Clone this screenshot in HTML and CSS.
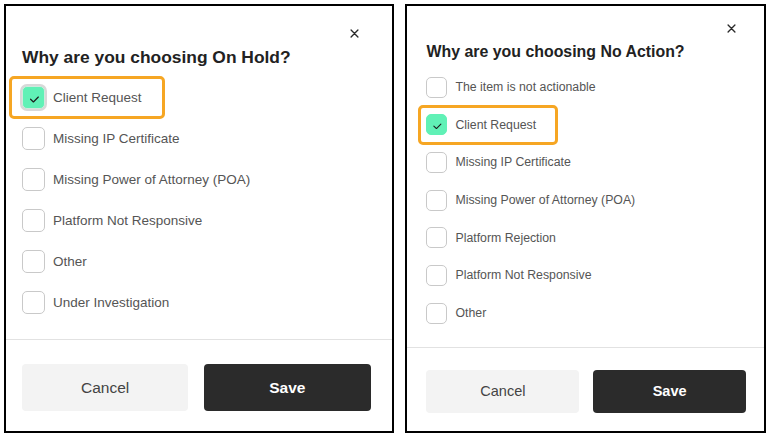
FILE: index.html
```html
<!DOCTYPE html>
<html lang="en">
<head>
<meta charset="utf-8">
<title>Reason dialogs</title>
<link rel="stylesheet" href="styles.css">
</head>
<body>
<div class="screen">
  <section class="dialog dialog--hold">
    <div class="dialog__body">
      <div class="dialog__top">
        <button class="dialog__close" aria-label="Close"><svg viewBox="0 0 10 10"><path d="M1.2 1.2L8.8 8.8M8.8 1.2L1.2 8.8"/></svg></button>
      </div>
      <h2 class="dialog__title">Why are you choosing On Hold?</h2>
      <ul class="options">
        <li class="option option--checked option--focus option--highlight"><span class="box"><svg viewBox="0 0 23 23"><path d="M8.3 13.4L11.4 16.4L16.8 11"/></svg></span><span class="option__text">Client Request</span></li>
        <li class="option"><span class="box"></span><span class="option__text">Missing IP Certificate</span></li>
        <li class="option"><span class="box"></span><span class="option__text">Missing Power of Attorney (POA)</span></li>
        <li class="option"><span class="box"></span><span class="option__text">Platform Not Responsive</span></li>
        <li class="option"><span class="box"></span><span class="option__text">Other</span></li>
        <li class="option"><span class="box"></span><span class="option__text">Under Investigation</span></li>
      </ul>
    </div>
    <div class="dialog__footer">
      <button class="btn btn--cancel">Cancel</button>
      <button class="btn btn--save">Save</button>
    </div>
  </section>

  <section class="dialog dialog--noaction">
    <div class="dialog__body">
      <div class="dialog__top">
        <button class="dialog__close" aria-label="Close"><svg viewBox="0 0 10 10"><path d="M1.2 1.2L8.8 8.8M8.8 1.2L1.2 8.8"/></svg></button>
      </div>
      <h2 class="dialog__title">Why are you choosing No Action?</h2>
      <ul class="options">
        <li class="option"><span class="box"></span><span class="option__text">The item is not actionable</span></li>
        <li class="option option--checked option--highlight"><span class="box"><svg viewBox="0 0 23 23"><path d="M8.3 13.4L11.4 16.4L16.8 11"/></svg></span><span class="option__text">Client Request</span></li>
        <li class="option"><span class="box"></span><span class="option__text">Missing IP Certificate</span></li>
        <li class="option"><span class="box"></span><span class="option__text">Missing Power of Attorney (POA)</span></li>
        <li class="option"><span class="box"></span><span class="option__text">Platform Rejection</span></li>
        <li class="option"><span class="box"></span><span class="option__text">Platform Not Responsive</span></li>
        <li class="option"><span class="box"></span><span class="option__text">Other</span></li>
      </ul>
    </div>
    <div class="dialog__footer">
      <button class="btn btn--cancel">Cancel</button>
      <button class="btn btn--save">Save</button>
    </div>
  </section>
</div>
</body>
</html>
```

FILE: styles.css
```css
* { box-sizing: border-box; }

html, body {
  margin: 0;
  padding: 0;
  background: #ffffff;
}

body {
  font-family: "Liberation Sans", Arial, sans-serif;
  color: #222;
}

.screen {
  display: flex;
  align-items: flex-start;
  gap: 11px;
  padding: 4px;
}

.dialog {
  --w: 391px;
  --pl: 16px;
  --pr: 22px;
  --top-pt: 19px;
  --top-mb: 4px;
  --close-mr: 8px;
  --title-size: 17.4px;
  --title-lh: 24px;
  --list-mt: 9.5px;
  --row-h: 37px;
  --row-gap: 4px;
  --opt-pl: 10px;
  --opt-pr: 20px;
  --box: 23px;
  --text-size: 13.5px;
  --body-pb: 18.5px;
  --foot-pt: 24px;
  --foot-pb: 20px;
  --btn-h: 47px;
  --btn-gap: 16px;
  --btn-size: 15.5px;

  width: var(--w);
  border: 2px solid #000;
  background: #fff;
  display: flex;
  flex-direction: column;
}

.dialog--noaction {
  --w: 361px;
  --pl: 19px;
  --pr: 18px;
  --top-pt: 14px;
  --top-mb: 4.5px;
  --close-mr: 7px;
  --title-size: 15.9px;
  --title-lh: 22px;
  --list-mt: 7.5px;
  --row-h: 34px;
  --row-gap: 3.7px;
  --opt-pl: 5px;
  --opt-pr: 19px;
  --box: 21px;
  --text-size: 12.3px;
  --body-pb: 16.8px;
  --foot-pt: 22px;
  --foot-pb: 18px;
  --btn-h: 43px;
  --btn-gap: 14px;
  --btn-size: 14.5px;
}

.dialog__body {
  padding: var(--top-pt) var(--pr) var(--body-pb) var(--pl);
}

.dialog__top {
  display: flex;
  justify-content: flex-end;
  margin-bottom: var(--top-mb);
}

.dialog__close {
  width: 16px;
  height: 16px;
  padding: 0;
  margin: 0 var(--close-mr) 0 0;
  border: 0;
  background: transparent;
  display: flex;
  align-items: center;
  justify-content: center;
}

.dialog__close svg {
  width: 9px;
  height: 9px;
  fill: none;
  stroke: #2a2a2a;
  stroke-width: 1.5;
  stroke-linecap: round;
}

.dialog__title {
  margin: 0;
  font-size: var(--title-size);
  line-height: var(--title-lh);
  font-weight: 700;
  color: #222;
}

.options {
  list-style: none;
  margin: var(--list-mt) 0 0 0;
  padding: 0;
  display: flex;
  flex-direction: column;
  gap: var(--row-gap);
}

.option {
  display: flex;
  align-items: center;
  gap: 8px;
  width: fit-content;
  height: var(--row-h);
  margin-left: calc(-1 * var(--opt-pl));
  padding: 0 var(--opt-pr) 0 var(--opt-pl);
  border-radius: 2px;
}

.option--highlight {
  outline: 3px solid #f6a623;
}

.box {
  flex: none;
  width: var(--box);
  height: var(--box);
  border: 1px solid #c9c9c9;
  border-radius: 5px;
  background: #fff;
  display: flex;
}

.option--checked .box {
  background: #60f1b6;
  border-color: #60f1b6;
}

.option--focus .box {
  box-shadow: 0 0 0 2px #d8d8d8;
  border-color: #cfe9dd;
}

.box svg {
  width: 100%;
  height: 100%;
  fill: none;
  stroke: #1c1c1c;
  stroke-width: 1.3;
  stroke-linecap: round;
  stroke-linejoin: round;
}

.option__text {
  font-size: var(--text-size);
  color: #555;
  white-space: nowrap;
}

.dialog__footer {
  border-top: 1px solid #e2e2e2;
  padding: var(--foot-pt) var(--pr) var(--foot-pb) var(--pl);
  display: flex;
  gap: var(--btn-gap);
}

.btn {
  flex: 1 1 0;
  height: var(--btn-h);
  border: 0;
  border-radius: 4px;
  font-family: "Liberation Sans", Arial, sans-serif;
  font-size: var(--btn-size);
}

.btn--cancel {
  background: #f3f3f3;
  color: #444;
}

.btn--save {
  background: #2b2b2b;
  color: #fff;
  font-weight: 700;
}
```
